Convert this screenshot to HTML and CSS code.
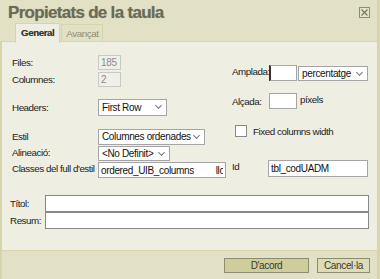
FILE: index.html
```html
<!DOCTYPE html>
<html lang="ca">
<head>
  <meta charset="UTF-8" />
  <title>Propietats de la taula</title>
  <link rel="stylesheet" href="styles.css">
</head>
<body>
  <div class="dialog">
    <div class="dialog-head">
      <div class="dialog-title">Propietats de la taula</div>
      <span class="close-btn">
        <svg width="11" height="11" viewBox="0 0 11 11">
          <rect x="0.5" y="0.5" width="10" height="10" fill="#e4e3cc" stroke="#8c8b78"/>
          <path d="M2.5 2.5 L8.5 8.5 M8.5 2.5 L2.5 8.5" stroke="#7a7964" stroke-width="1.2"/>
        </svg>
      </span>
      <div class="tabs">
        <div class="tab active">General</div>
        <div class="tab">Avançat</div>
      </div>
    </div>

    <div class="dialog-body">
      <div class="columns">
        <div class="col-left">
          <div class="row r-files">
            <label>Files:</label>
            <input class="small" type="text" value="185" disabled />
          </div>
          <div class="row r-cols">
            <label>Columnes:</label>
            <input class="small" type="text" value="2" disabled />
          </div>
          <div class="row r-headers">
            <label>Headers:</label>
            <div class="select w-headers">First Row<span class="chev"></span></div>
          </div>
          <div class="row r-estil">
            <label>Estil</label>
            <div class="select w-estil">Columnes ordenades<span class="chev"></span></div>
          </div>
          <div class="row r-align">
            <label>Alineació:</label>
            <div class="select w-align">&lt;No Definit&gt;<span class="chev"></span></div>
          </div>
          <div class="row r-classes">
            <label>Classes del full d'estil</label>
            <input class="w-classes" type="text" value="ordered_UIB_columns         lloc" />
          </div>
        </div>

        <div class="col-right">
          <div class="row r-width">
            <label>Amplada:</label>
            <input class="dim caret" type="text" />
            <div class="select w-unit">percentatge<span class="chev"></span></div>
          </div>
          <div class="row r-height">
            <label>Alçada:</label>
            <input class="dim" type="text" />
            <span class="unit">píxels</span>
          </div>
          <div class="row r-check">
            <span class="check"></span>
            <span>Fixed columns width</span>
          </div>
          <div class="row r-id">
            <label>Id</label>
            <input class="w-id" type="text" value="tbl_codUADM" />
          </div>
        </div>
      </div>

      <div class="wide-rows">
        <div class="row">
          <label>Títol:</label>
          <input class="wide" type="text" />
        </div>
        <div class="row">
          <label>Resum:</label>
          <input class="wide" type="text" />
        </div>
      </div>
    </div>

    <div class="dialog-foot">
      <button class="btn ok">D'acord</button>
      <button class="btn">Cancel·la</button>
    </div>
  </div>
</body>
</html>
```

FILE: styles.css
```css
:root {
  --head-bg: #e2e1c5;
  --body-bg: #efeee2;
  --edge: #d6d4a8;
  --text: #222;
  --field-border: #a5a5a5;
}

body {
  margin: 0;
  font-family: 'Liberation Sans', Arial, sans-serif;
  font-size: 9.8px;
  letter-spacing: -0.45px;
  color: var(--text);
}

.dialog {
  width: 380px;
  height: 279px;
  display: flex;
  flex-direction: column;
  background: var(--body-bg);
  border-left: 2px solid var(--edge);
  border-right: 3px solid var(--edge);
  box-sizing: border-box;
}

.dialog-head {
  position: relative;
  height: 42px;
  background: var(--head-bg);
  border-bottom: 1px solid #d7d5ab;
  box-sizing: border-box;
  margin-left: -2px;
  padding-left: 8px;
}

.dialog-title {
  padding-top: 3px;
  font-size: 17px;
  font-weight: bold;
  color: #6b6a58;
  text-shadow: 0 0 1px #a9a88f;
  letter-spacing: -0.7px;
}

.close-btn {
  position: absolute;
  right: 7px;
  top: 7px;
  line-height: 0;
}

.tabs {
  display: flex;
  gap: 1px;
  margin-left: 7px;
  margin-top: 1px;
}

.tab {
  height: 16px;
  padding: 1px 4px 0;
  border: 1px solid #d6d4aa;
  border-bottom: none;
  color: #8d8c72;
  line-height: 15px;
}

.tab.active {
  height: 18px;
  margin-top: -1px;
  padding: 1px 5px 0;
  background: var(--body-bg);
  color: #3b3b33;
  font-weight: bold;
  text-shadow: 0 0 0.5px #777;
}

.dialog-body {
  flex: 1;
  padding: 13px 0 0 10px;
}

.columns {
  display: flex;
}

.col-left {
  width: 220px;
  display: flex;
  flex-direction: column;
}

.col-right {
  display: flex;
  flex-direction: column;
}

.row {
  display: flex;
  align-items: flex-start;
}

.row label {
  line-height: 14px;
}

.col-left label {
  width: 86px;
  white-space: nowrap;
}

.col-right label {
  width: 37px;
  white-space: nowrap;
}

input {
  font-family: inherit;
  font-size: 10px;
  letter-spacing: -0.35px;
  height: 15px;
  box-sizing: border-box;
  border: 1px solid var(--field-border);
  background: #fff;
  padding: 0 2px;
  margin: 0;
  color: #111;
}

input.small {
  width: 23px;
  background: #f0f0ea;
  border-color: #c9c9c2;
  color: #8a8a8a;
}

input:disabled {
  background: #f0f0ea;
}

.r-cols { margin-top: 2px; }
.r-headers { margin-top: 12px; }
.r-estil { margin-top: 13px; }
.r-align { margin-top: 1px; }
.r-classes { margin-top: 1px; }

.r-files label, .r-cols label { margin-top: 1px; }
.r-estil label { margin-top: 1px; }
.r-headers label { margin-top: 2px; }

.select {
  position: relative;
  height: 16px;
  box-sizing: border-box;
  border: 1px solid var(--field-border);
  background: #fff;
  padding: 0 0 0 3px;
  font-size: 10px;
  letter-spacing: -0.35px;
  line-height: 14px;
  color: #111;
}

.chev {
  position: absolute;
  right: 5px;
  top: 3px;
  width: 4px;
  height: 4px;
  border-right: 1px solid #777;
  border-bottom: 1px solid #777;
  transform: rotate(45deg);
}

.w-headers { width: 69px; height: 17px; line-height: 15px; }
.w-estil { width: 107px; }
.w-align { width: 72px; height: 15px; line-height: 13px; }
.w-classes { width: 128px; height: 16px; }

.r-width { margin-top: 10px; }
.r-height { margin-top: 12px; }
.r-check { margin-top: 16px; margin-left: 3px; align-items: center; gap: 6px; }
.r-id { margin-top: 23px; }

.r-height label { margin-top: 2px; }

input.dim {
  width: 28px;
  height: 16px;
}

input.caret {
  border-left: 2px solid #333;
}

.w-unit {
  width: 70px;
  height: 15px;
  margin-left: 1px;
  margin-top: 1px;
  line-height: 13px;
}

.unit {
  margin-left: 3px;
  margin-top: 1px;
}

.check {
  width: 10px;
  height: 10px;
  border: 1px solid #8a8a8a;
  background: #fff;
}

.w-id {
  width: 100px;
  height: 17px;
  margin-left: -1px;
}

.wide-rows {
  margin-top: 17px;
  display: flex;
  flex-direction: column;
}

.wide-rows label {
  width: 35px;
  margin-top: 2px;
  margin-left: -2px;
}

input.wide {
  width: 324px;
  height: 17px;
  border-color: #888;
}

.dialog-foot {
  height: 29px;
  background: var(--head-bg);
  border-top: 1px solid #d7d5ab;
  box-sizing: border-box;
  display: flex;
  justify-content: flex-end;
  gap: 8px;
  padding: 7px 7px 0 0;
}

.btn {
  height: 15px;
  padding: 0;
  font-family: inherit;
  font-size: 10px;
  letter-spacing: -0.35px;
  color: #3a3a30;
  background: #dedcb8;
  border: 1px solid #8d8b70;
  line-height: 13px;
}

.btn.ok {
  width: 85px;
  background: #cfcd9a;
}

.btn:not(.ok) {
  width: 53px;
}
```
